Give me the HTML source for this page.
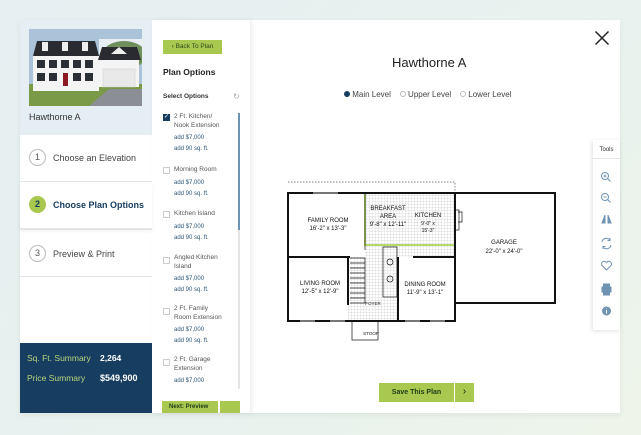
<!DOCTYPE html>
<html><head><meta charset="utf-8">
<style>
*{margin:0;padding:0;box-sizing:border-box}
body{width:641px;height:435px;overflow:hidden;background:linear-gradient(135deg,#e6eff1 0%,#e9f2ee 60%,#eef4ea 100%);font-family:"Liberation Sans",sans-serif;position:relative}
.abs{position:absolute}
.card{left:20px;top:20px;width:600px;height:393px;background:#fff;box-shadow:0 2px 6px rgba(0,0,0,.06)}
.lefttop{left:20px;top:20px;width:132px;height:115px;background:#e5eef3}
.step{left:20px;width:132px;background:#fff;border-bottom:1px solid #e3e6e8}
.circ{position:absolute;left:9px;width:17px;height:17px;border:1px solid #bbb;border-radius:50%;font-size:9px;color:#555;text-align:center;line-height:15px}
.stxt{position:absolute;left:33px;font-size:9px;color:#444;white-space:nowrap}
.sum{left:20px;top:343px;width:132px;height:70px;background:#173e61}
.mid{left:152px;top:20px;width:98px;height:393px;background:#fff;box-shadow:2px 0 4px rgba(0,0,0,.07)}
.opt{position:absolute;left:11px;font-size:6.5px;color:#555;line-height:8.7px}
.opt .cb{position:absolute;left:0;top:1px;width:7px;height:7px;border:1px solid #ccc;background:#fff}
.opt .t{margin-left:11px}
.opt .p{margin-left:11px;margin-top:3px;color:#2e5679;font-size:6px;line-height:11px}
.green{background:#a8c84f}
</style></head><body>
<div class="abs card"></div>
<div class="abs lefttop"></div>
<svg class="abs" style="left:29px;top:29px" width="113" height="77" viewBox="0 0 113 77">
<rect width="113" height="77" fill="#aac3d9"/>
<rect x="70" y="10" width="43" height="20" fill="#e8eef4"/>
<ellipse cx="95" cy="26" rx="22" ry="14" fill="#6f8f5c"/>
<rect x="0" y="55" width="113" height="22" fill="#7a9a48"/>
<polygon points="60,77 113,77 113,60 80,60" fill="#8b8f95"/>
<rect x="4" y="26" width="66" height="36" fill="#f4f4f4"/>
<polygon points="4,27 8,12 66,12 70,27" fill="#2a2b30"/>
<rect x="70" y="30" width="40" height="28" fill="#f4f4f4"/>
<polygon points="69,31 73,18 108,18 112,31" fill="#2a2b30"/>
<rect x="13" y="13" width="6" height="9" fill="#eee"/><rect x="33" y="13" width="6" height="9" fill="#eee"/><rect x="53" y="13" width="6" height="9" fill="#eee"/>
<polygon points="82,25 90,18 98,25" fill="#eee"/>
<g fill="#2b2f36">
<rect x="8" y="31" width="8" height="8"/><rect x="20" y="31" width="8" height="8"/><rect x="32" y="31" width="8" height="8"/><rect x="44" y="31" width="8" height="8"/><rect x="56" y="31" width="8" height="8"/>
<rect x="8" y="44" width="8" height="8"/><rect x="20" y="44" width="8" height="8"/><rect x="44" y="44" width="8" height="8"/><rect x="56" y="44" width="8" height="8"/>
</g>
<rect x="34" y="44" width="5" height="13" fill="#8b1a22"/>
<rect x="74" y="40" width="32" height="18" fill="#e9e9e9" stroke="#ccc" stroke-width=".5"/>
</svg>
<div class="abs" style="left:29px;top:112px;font-size:9px;color:#333">Hawthorne A</div>

<div class="abs step" style="top:135px;height:47px"><div class="circ" style="top:14px">1</div><div class="stxt" style="top:18px">Choose an Elevation</div></div>
<div class="abs step" style="top:182px;height:47px;box-shadow:0 2px 4px rgba(0,0,0,.06);z-index:2"><div class="circ" style="top:14px;background:#a8c84f;border-color:#a8c84f;color:#173e61;font-weight:bold">2</div><div class="stxt" style="top:18px;font-weight:bold;color:#173e61">Choose Plan Options</div></div>
<div class="abs step" style="top:229px;height:48px;border-top:1px solid #eee"><div class="circ" style="top:15px">3</div><div class="stxt" style="top:19px">Preview &amp; Print</div></div>

<div class="abs sum">
<div class="abs" style="left:7px;top:10px;font-size:8.5px;color:#b8d47a">Sq. Ft. Summary</div>
<div class="abs" style="left:80px;top:10px;font-size:8.5px;color:#fff;font-weight:bold">2,264</div>
<div class="abs" style="left:7px;top:30px;font-size:8.5px;color:#b8d47a">Price Summary</div>
<div class="abs" style="left:80px;top:30px;font-size:9px;color:#fff;font-weight:bold">$549,900</div>
</div>

<div class="abs mid">
<div class="abs green" style="left:11px;top:20px;width:59px;height:14px;font-size:6.5px;color:#2f4a1e;line-height:14px;text-align:center">‹ Back To Plan</div>
<div class="abs" style="left:11px;top:47px;font-size:8.5px;font-weight:bold;color:#222">Plan Options</div>
<div class="abs" style="left:11px;top:73px;font-size:6.5px;font-weight:bold;color:#333">Select Options</div>
<div class="abs" style="left:81px;top:72px;font-size:8px;color:#aaa">↻</div>
<div class="abs" style="left:86px;top:93px;width:2px;height:276px;background:#e4e4e4"></div>
<div class="abs" style="left:86px;top:93px;width:2px;height:117px;background:#6f93b3"></div>
<div class="opt" style="top:93px"><div class="cb" style="background:#173e61;border-color:#173e61;color:#fff;font-size:6px;line-height:5px;text-align:center">✓</div><div class="t">2 Ft. Kitchen/<br>Nook Extension</div><div class="p">add $7,000<br>add 90 sq. ft.</div></div>
<div class="opt" style="top:146px"><div class="cb"></div><div class="t">Morning Room</div><div class="p">add $7,000<br>add 90 sq. ft.</div></div>
<div class="opt" style="top:190px"><div class="cb"></div><div class="t">Kitchen Island</div><div class="p">add $7,000<br>add 90 sq. ft.</div></div>
<div class="opt" style="top:234px"><div class="cb" style="top:3px"></div><div class="t">Angled Kitchen<br>Island</div><div class="p">add $7,000<br>add 90 sq. ft.</div></div>
<div class="opt" style="top:285px"><div class="cb" style="top:3px"></div><div class="t">2 Ft. Family<br>Room Extension</div><div class="p">add $7,000<br>add 90 sq. ft.</div></div>
<div class="opt" style="top:336px"><div class="cb" style="top:3px"></div><div class="t">2 Ft. Garage<br>Extension</div><div class="p">add $7,000</div></div>
<div class="abs green" style="left:10px;top:381px;width:56px;height:12px;font-size:6px;font-weight:bold;color:#1d3a1a;padding:3px 0 0 7px">Next: Preview</div>
<div class="abs green" style="left:68px;top:381px;width:20px;height:12px"></div>
</div>

<svg class="abs" style="left:594px;top:30px" width="16" height="16" viewBox="0 0 16 16"><path d="M1.5 1.5L14.5 14.5M14.5 1.5L1.5 14.5" stroke="#222" stroke-width="1.5"/></svg>
<div class="abs" style="left:392px;top:55px;font-size:13px;color:#222">Hawthorne A</div>
<div class="abs" style="left:344px;top:90px;font-size:8px;color:#444;white-space:nowrap">
<span style="display:inline-block;width:6px;height:6px;border-radius:50%;background:#173e61"></span> Main Level &nbsp;&nbsp;
<span style="display:inline-block;width:6px;height:6px;border-radius:50%;border:1px solid #bbb"></span> Upper Level &nbsp;&nbsp;
<span style="display:inline-block;width:6px;height:6px;border-radius:50%;border:1px solid #bbb"></span> Lower Level</div>

<svg class="abs" style="left:270px;top:170px" width="300" height="180" viewBox="270 170 300 180" font-family="Liberation Sans" font-size="6" text-anchor="middle" fill="#111">
<defs><pattern id="g" width="3" height="3" patternUnits="userSpaceOnUse"><path d="M0 0H3M0 0V3" stroke="#bbb" stroke-width=".5"/></pattern></defs>
<path d="M288 182H455V193" stroke="#555" stroke-dasharray="1.5 1.5" fill="none" stroke-width=".7"/>
<rect x="365" y="193" width="90" height="64" fill="url(#g)"/>
<rect x="348" y="257" width="50" height="64" fill="url(#g)"/>
<path d="M365 193V245H455V193" fill="none" stroke="#b6d96a" stroke-width="2"/>
<g fill="none" stroke="#111" stroke-width="2">
<rect x="288" y="193" width="167" height="128"/>
<path d="M455 193H555V303H455"/>
<path d="M288 257H350M413 257H455"/>
<path d="M398 257V321M348 257V305"/>
</g>
<g stroke="#111" stroke-width=".7" fill="none">
<path d="M365 193V250"/><path d="M350 258h15v45h-15M350 263h15M350 268h15M350 273h15M350 278h15M350 283h15M350 288h15M350 293h15M350 298h15"/>
<rect x="383" y="247" width="14" height="50"/><circle cx="390" cy="262" r="3"/><circle cx="390" cy="279" r="3"/>
<rect x="352" y="321" width="26" height="19"/>
<path d="M456 210h3v20h-3M458 212h4v10h-4"/>
</g>
<g stroke="#999" stroke-width="1.5"><path d="M313 193h25M300 321h15M330 321h15M405 321h15M430 321h15"/></g>
<text x="328" y="222">FAMILY ROOM</text><text x="328" y="230">16'-2" x 13'-3"</text>
<text x="388" y="210">BREAKFAST</text><text x="388" y="218">AREA</text><text x="388" y="226">9'-8" x 12'-11"</text>
<text x="428" y="217">KITCHEN</text><text x="428" y="225" font-size="5">9'-0" x</text><text x="428" y="232" font-size="5">15'-3"</text>
<text x="504" y="244">GARAGE</text><text x="504" y="253">22'-0" x 24'-0"</text>
<text x="320" y="285">LIVING ROOM</text><text x="320" y="293">12'-5" x 12'-9"</text>
<text x="425" y="286">DINING ROOM</text><text x="425" y="294">11'-9" x 13'-1"</text>
<text x="371" y="335" font-size="4.5">STOOP</text><text x="373" y="305" font-size="4.5">FOYER</text>
</svg>

<div class="abs green" style="left:379px;top:383px;width:75px;height:19px;font-size:7px;font-weight:bold;color:#1d3a1a;text-align:center;line-height:19px">Save This Plan</div>
<div class="abs green" style="left:455px;top:383px;width:19px;height:19px;font-size:10px;color:#222;text-align:center;line-height:18px">›</div>

<div class="abs" style="left:593px;top:140px;width:27px;height:190px;background:#fff;box-shadow:-1px 1px 4px rgba(0,0,0,.12)">
<div style="font-size:6px;color:#333;text-align:center;margin-top:7px">Tools</div>
<div style="border-top:1px solid #e6e6e6;margin-top:5px"></div>
<svg width="27" height="170" viewBox="0 0 27 170" fill="none" stroke="#6f93b3" stroke-width="1">
<circle cx="12" cy="17" r="3.5"/><path d="M14.5 19.5l3 3M10.5 17h3M12 15.5v3"/>
<circle cx="12" cy="38" r="3.5"/><path d="M14.5 40.5l3 3M10.5 38h3"/>
<path d="M12 56l-3 8h3zM15 56l3 8h-3z" fill="#6f93b3"/>
<path d="M9 83a4.5 4.5 0 0 1 8-2M18 86a4.5 4.5 0 0 1-8 2M17 79v2.5h-2.5M10 90v-2.5h2.5"/>
<path d="M13.5 111l-4.5-4.5a2.6 2.6 0 0 1 4.5-3a2.6 2.6 0 0 1 4.5 3z"/>
<rect x="9" y="128" width="9" height="5" fill="#6f93b3"/><rect x="10.5" y="125" width="6" height="3" fill="#6f93b3"/><rect x="10.5" y="133" width="6" height="3" fill="#6f93b3"/>
<circle cx="13.5" cy="152" r="4.5" fill="#6f93b3" stroke="none"/><path d="M13.5 151v3.5M13.5 149.5v.5" stroke="#fff"/>
</svg>
</div>
</body></html>
